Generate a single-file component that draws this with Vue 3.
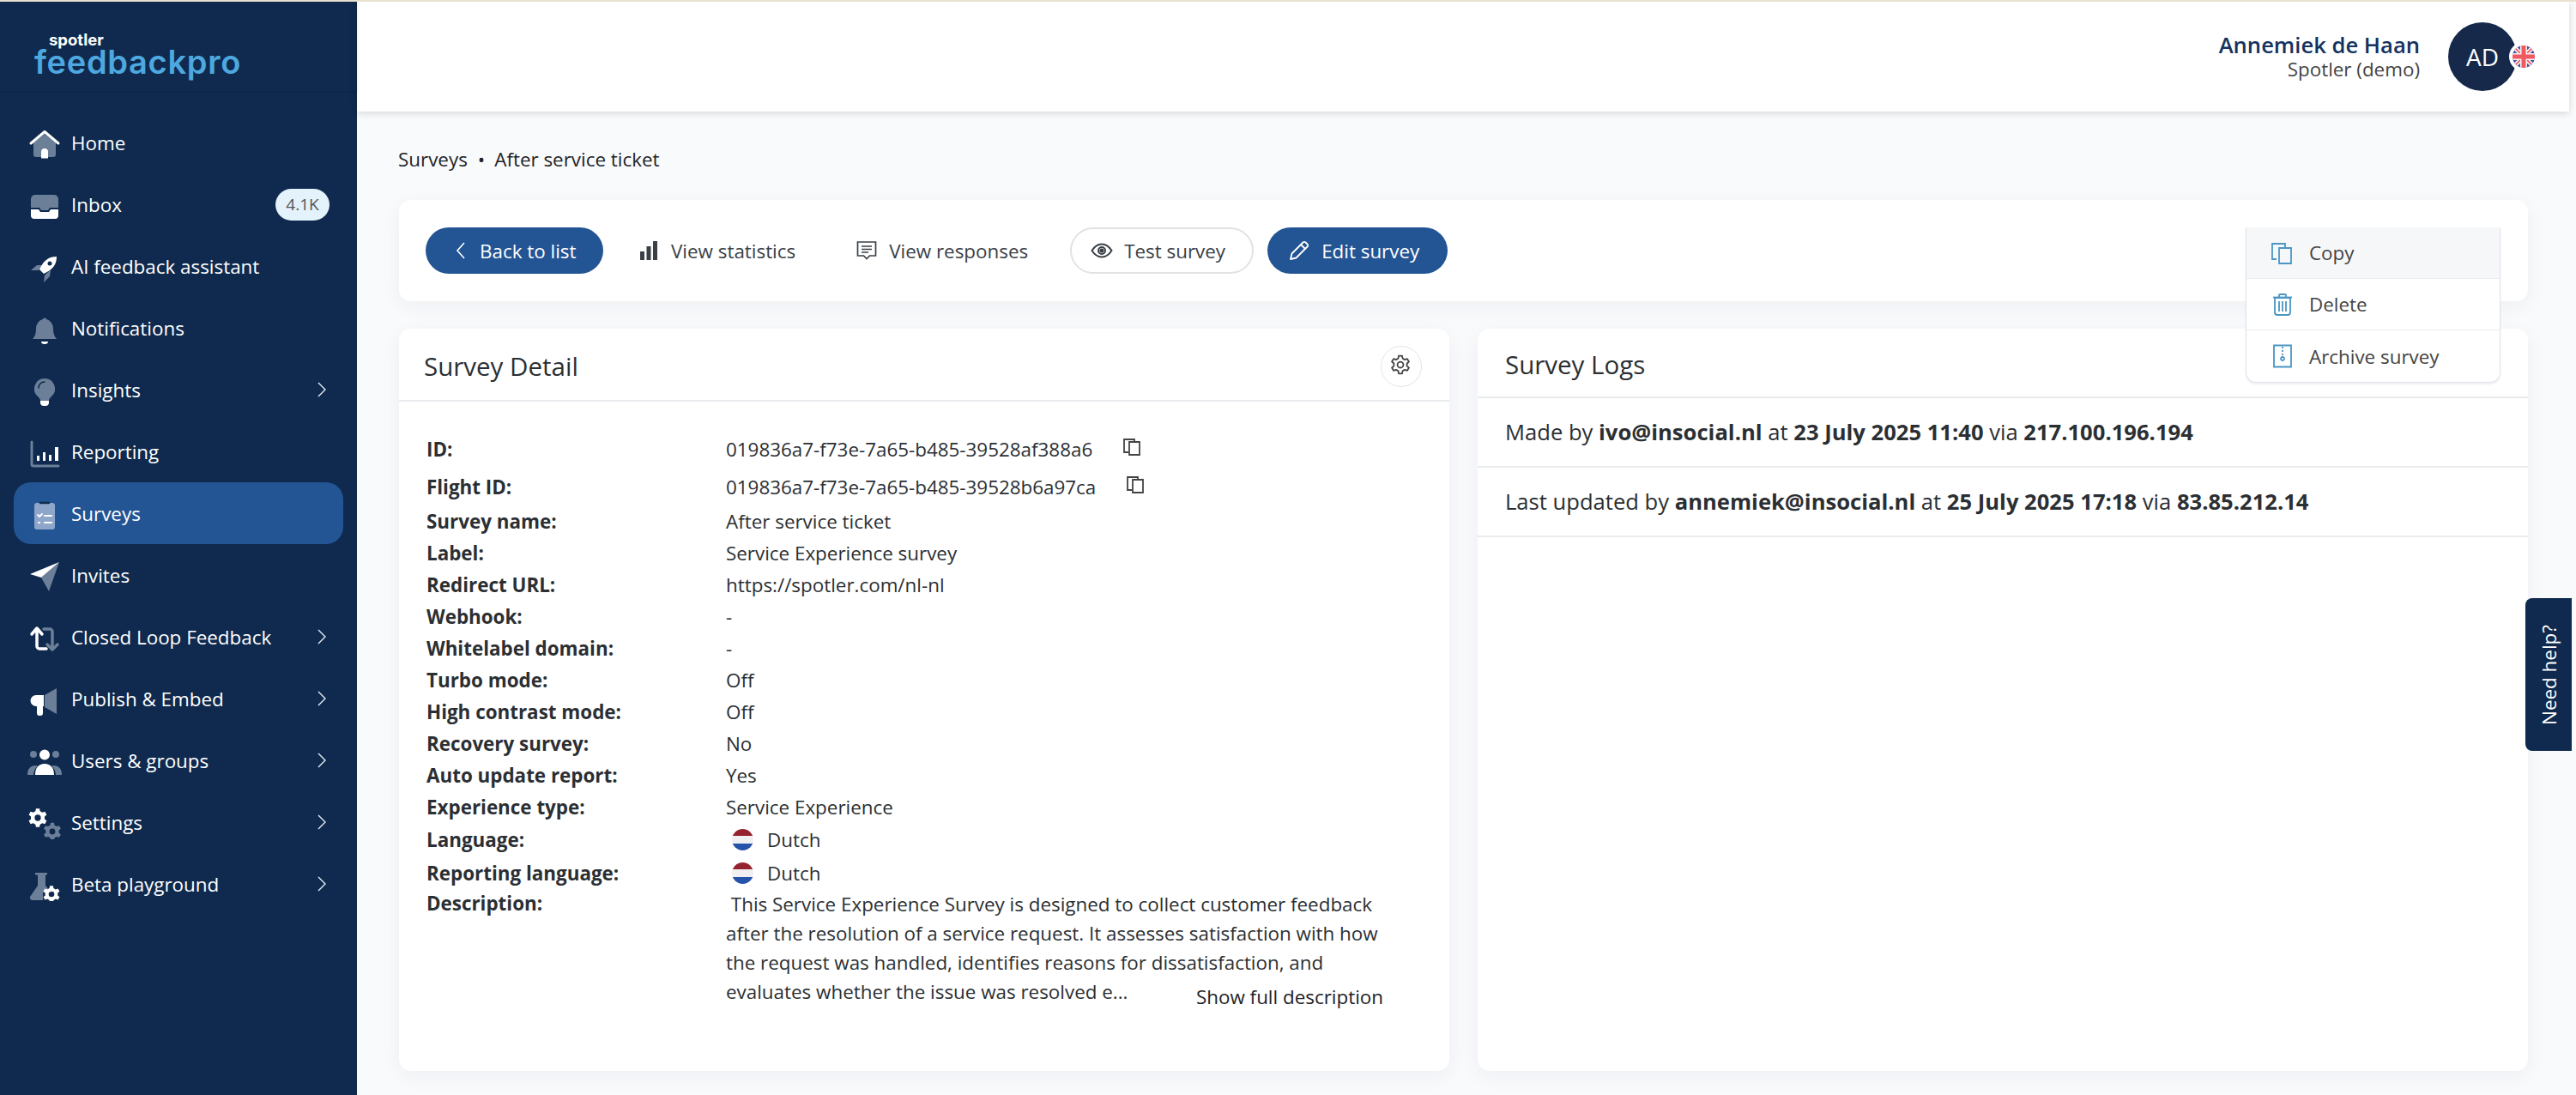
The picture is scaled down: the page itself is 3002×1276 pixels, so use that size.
<template>
  <div class="page">
    <aside class="sidebar">
      <div class="logo">
        <span class="logo-top">spotler</span>
        <span class="logo-main">feedbackpro</span>
      </div>
      <nav class="nav">
        <div v-for="item in menu" :key="item.label" class="nav-item" :class="{ active: item.active }">
          <svg class="nav-icon" viewBox="0 0 40 40">
            <path v-for="(p, i) in item.icon" :key="i" :d="p.d" :fill="p.stroke ? 'none' : toneColor(p.tone)"
              :stroke="p.stroke ? toneColor(p.tone) : 'none'" :stroke-width="p.stroke || 0" fill-rule="evenodd"
              stroke-linecap="round" stroke-linejoin="round" />
          </svg>
          <span class="nav-label">{{ item.label }}</span>
          <span v-if="item.badge" class="badge">{{ item.badge }}</span>
          <svg v-if="item.sub" class="nav-chevron" viewBox="0 0 10 20">
            <path d="M1 2l8 8-8 8" fill="none" stroke="#e8edf3" stroke-width="1.4" />
          </svg>
        </div>
      </nav>
    </aside>

    <div class="main">
      <header class="topbar">
        <div class="user">
          <div class="user-name">Annemiek de Haan</div>
          <div class="user-org">Spotler (demo)</div>
        </div>
        <div class="avatar">
          AD
          <span class="avatar-flag">
            <svg viewBox="0 0 26 26">
              <defs>
                <clipPath id="ukclip"><circle cx="13" cy="13" r="13" /></clipPath>
              </defs>
              <g clip-path="url(#ukclip)">
                <rect width="26" height="26" fill="#4a4f9c" />
                <path d="M0 0L26 26M26 0L0 26" stroke="#f3f3f6" stroke-width="5" />
                <path d="M0 0L26 26M26 0L0 26" stroke="#f0595f" stroke-width="1.6" />
                <path d="M13 0V26M0 13H26" stroke="#f3f3f6" stroke-width="8" />
                <path d="M13 0V26M0 13H26" stroke="#f0595f" stroke-width="5" />
              </g>
            </svg>
          </span>
        </div>
      </header>

      <div class="content">
        <div class="crumbs"><span>Surveys</span><span class="crumb-dot">•</span><span>After service ticket</span></div>

        <section class="toolbar">
          <button class="btn btn-primary back">
            <svg class="ico" width="14" height="24" viewBox="0 0 14 24"><path d="M11 3L3 12l8 9" fill="none" stroke="#fff" stroke-width="1.6" /></svg>
            Back to list
          </button>
          <button class="btn btn-plain stats">
            <svg width="22" height="22" viewBox="0 0 22 22"><path d="M1 12h5v10H1zM8.500 6h5v16h-5zM16 0h5v22h-5z" fill="#3a4046" /></svg>
            View statistics
          </button>
          <button class="btn btn-plain resp">
            <svg width="24" height="24" viewBox="0 0 24 24" fill="none" stroke="#3a4046" stroke-width="1.700"><path d="M1.500 2h21v16h-7l-3.500 3.500-3.500-3.500h-7z" /><path d="M6 7h12M6 10.500h12M6 14h8" /></svg>
            View responses
          </button>
          <button class="btn btn-outline test">
            <svg width="26" height="18" viewBox="0 0 26 18" fill="none" stroke="#3a4046" stroke-width="2"><path d="M1.500 9C5 3.500 9 1.500 13 1.500S21 3.500 24.500 9C21 14.500 17 16.500 13 16.500S5 14.500 1.500 9z" /><circle cx="13" cy="9" r="4" /><circle cx="13" cy="9" r="1.500" fill="#3a4046" /></svg>
            Test survey
          </button>
          <button class="btn btn-primary edit">
            <svg width="24" height="24" viewBox="0 0 24 24" fill="none" stroke="#fff" stroke-width="1.800" stroke-linejoin="round"><path d="M2 22l1.500-6.500L16.500 2.500a2 2 0 0 1 3 0l2 2a2 2 0 0 1 0 3L8.500 20.500z" /><path d="M14 5l5 5" /></svg>
            Edit survey
          </button>

          <div class="dropdown">
            <div v-for="a in actions" :key="a.label" class="drop-row" :class="{ hover: a.hover }">
              <svg class="drop-icon" width="28" height="28" viewBox="0 0 28 28" fill="none" stroke="#4a96c4" stroke-width="1.800">
                <path v-for="(d, i) in a.paths" :key="i" :d="d" />
              </svg>
              {{ a.label }}
            </div>
          </div>
        </section>

        <div class="cards">
          <section class="card">
            <div class="card-head detail-head">
              <h2>Survey Detail</h2>
              <button class="gear-btn">
                <svg width="28" height="28" viewBox="0 0 40 40">
                  <path :d="gearPath(20, 20, 15, 6)" fill="none" stroke="#444" stroke-width="2.600" stroke-linejoin="round" />
                </svg>
              </button>
            </div>
            <div class="detail-body">
              <div v-for="row in details" :key="row.label" class="detail-row" :class="row.cls">
                <span class="detail-label">{{ row.label }}</span>
                <span class="detail-value">
                  <template v-if="row.flag">
                    <span class="nl-flag"></span>
                    <span class="dutch">{{ row.value }}</span>
                  </template>
                  <template v-else>{{ row.value }}</template>
                  <svg v-if="row.copy" class="copy-ico" width="20" height="20" viewBox="0 0 20 20" fill="none" stroke="#444" stroke-width="1.800">
                    <path d="M6 16H1V1h12v3" /><path d="M7 4h12v15H7z" />
                  </svg>
                </span>
              </div>
              <div class="detail-row desc-row">
                <span class="detail-label">Description:</span>
                <div class="desc">
                  <p>&nbsp;This Service Experience Survey is designed to collect customer feedback after the resolution of a service request. It assesses satisfaction with how the request was handled, identifies reasons for dissatisfaction, and</p>
                  <div class="desc-last">
                    <span>evaluates whether the issue was resolved e...</span>
                    <span class="show-full">Show full description</span>
                  </div>
                </div>
              </div>
            </div>
          </section>

          <section class="card">
            <div class="card-head logs-head"><h2>Survey Logs</h2></div>
            <div class="log-row">Made by <b>ivo@insocial.nl</b> at <b>23 July 2025 11:40</b> via <b>217.100.196.194</b></div>
            <div class="log-row">Last updated by <b>annemiek@insocial.nl</b> at <b>25 July 2025 17:18</b> via <b>83.85.212.14</b></div>
          </section>
        </div>
      </div>
    </div>

    <div class="help"><span>Need help?</span></div>
  </div>
</template>

<script setup>
function gearPath(cx, cy, r, teeth) {
  // cog outline, teeth around the circle
  const inner = r * 0.74
  const step = (Math.PI * 2) / teeth
  let d = ''
  for (let i = 0; i < teeth; i++) {
    const a = i * step - Math.PI / 2
    const pts = [
      [inner, a - step * 0.32],
      [r, a - step * 0.18],
      [r, a + step * 0.18],
      [inner, a + step * 0.32]
    ]
    pts.forEach(([rad, ang], j) => {
      const x = (cx + rad * Math.cos(ang)).toFixed(2)
      const y = (cy + rad * Math.sin(ang)).toFixed(2)
      d += (i === 0 && j === 0 ? 'M' : 'L') + x + ' ' + y
    })
  }
  d += 'Z'
  const h = r * 0.33
  d += `M${cx - h} ${cy}a${h} ${h} 0 1 0 ${h * 2} 0a${h} ${h} 0 1 0 ${-h * 2} 0Z`
  return d
}

function toneColor(tone) {
  if (tone === 'w') return '#ffffff'
  if (tone === 'd') return '#0f2a4e'
  if (tone === 'l') return '#8ea6c9'
  return '#6c7f98'
}

const menu = [
  { label: 'Home', icon: [
    { tone: 'g', d: 'M7 20L20 10l13 10v14a3 3 0 0 1-3 3H10a3 3 0 0 1-3-3z' },
    { tone: 'w', d: 'M4 21L20 7.500 36 21', stroke: 3 },
    { tone: 'w', d: 'M16 38.500V31a4 4 0 0 1 8 0v7.500z' }
  ] },
  { label: 'Inbox', badge: '4.1K', icon: [
    { tone: 'g', d: 'M9 9h22a5 5 0 0 1 5 5v10H26l-2 3H16l-2-3H4V14a5 5 0 0 1 5-5z' },
    { tone: 'w', d: 'M4 26h9l2 3h10l2-3h9v7a4 4 0 0 1-4 4H8a4 4 0 0 1-4-4z' }
  ] },
  { label: 'AI feedback assistant', icon: [
    { tone: 'g', d: 'M4 25l7-6h7l-5 6zM20 31l7-7-1 8-7 7z' },
    { tone: 'w', d: 'M34 9c-9 0-15 4-20 15l5 5c11-5 15-11 15-20zM26 14.500a2.500 2.500 0 1 0 0 5 2.500 2.500 0 0 0 0-5z' }
  ] },
  { label: 'Notifications', icon: [
    { tone: 'g', d: 'M6 33c3-3 4-7 4-12 0-6 4-10 8-11 0-2 4-2 4 0 4 1 8 5 8 11 0 5 1 9 4 12z' },
    { tone: 'w', d: 'M16 36h8a4 3 0 0 1-8 0z' }
  ] },
  { label: 'Insights', sub: true, icon: [
    { tone: 'g', d: 'M20 7a12 12 0 0 1 8 21c-2 2-3 3-3 5H15c0-2-1-3-3-5a12 12 0 0 1 8-21z' },
    { tone: 'd', d: 'M13 18c0-4 3-7 7-7', stroke: 1.6 },
    { tone: 'w', d: 'M15 33h10v2a4 4 0 0 1-4 4h-2a4 4 0 0 1-4-4z' }
  ] },
  { label: 'Reporting', icon: [
    { tone: 'g', d: 'M5 9v26a2 2 0 0 0 2 2h29', stroke: 3 },
    { tone: 'w', d: 'M11 25h3v6h-3zM18 21h3v10h-3zM25 24h3v7h-3zM32 15h4v16h-4z' }
  ] },
  { label: 'Surveys', active: true, icon: [
    { tone: 'l', d: 'M11 8h18a3 3 0 0 1 3 3v25a3 3 0 0 1-3 3H11a3 3 0 0 1-3-3V11a3 3 0 0 1 3-3z' },
    { tone: 'd', d: 'M15 8h10', stroke: 2.500 },
    { tone: 'w', d: 'M12 22l2 2 3-3', stroke: 1.800 },
    { tone: 'w', d: 'M20 23h8M20 31h8M13 31h1', stroke: 2.200 }
  ] },
  { label: 'Invites', icon: [
    { tone: 'g', d: 'M37 5L16 23l9 16z' },
    { tone: 'w', d: 'M3 19L37 5 16 23z' }
  ] },
  { label: 'Closed Loop Feedback', sub: true, icon: [
    { tone: 'g', d: 'M19 11h7a3 3 0 0 1 3 3v20M23 29l6 6 6-6', stroke: 3.500 },
    { tone: 'w', d: 'M11 12v19a3 3 0 0 0 3 3h8M5 17l6-7 6 7', stroke: 3.500 }
  ] },
  { label: 'Publish & Embed', sub: true, icon: [
    { tone: 'g', d: 'M20 16L34 8v30l-14-8z' },
    { tone: 'w', d: 'M10 16h9v13H10a6.500 6.500 0 0 1 0-13zM11 29h7v8a3 3 0 0 1-3 3h-1a3 3 0 0 1-3-3z' }
  ] },
  { label: 'Users & groups', sub: true, icon: [
    { tone: 'g', d: 'M3 13a4 4 0 1 0 8 0 4 4 0 0 0-8 0zM29 13a4 4 0 1 0 8 0 4 4 0 0 0-8 0zM0 37c0-7 3-11 10-11l2 1c-3 2-5 6-5 10zM40 37c0-7-3-11-10-11l-2 1c3 2 5 6 5 10z' },
    { tone: 'w', d: 'M14 13.500a6 6 0 1 0 12 0 6 6 0 0 0-12 0zM9 37c0-8 4-13 11-13s11 5 11 13z' }
  ] },
  { label: 'Settings', sub: true, icon: [
    { tone: 'g', d: gearPath(29, 31, 10.500, 6) },
    { tone: 'w', d: gearPath(12, 15, 11, 6) }
  ] },
  { label: 'Beta playground', sub: true, icon: [
    { tone: 'g', d: 'M9 7h14v2.500h-2V22l7 8H18v9H6a3 3 0 0 1-3-4l9-13V9.500H9z' },
    { tone: 'w', d: gearPath(28, 32, 10, 6) }
  ] }
]

const actions = [
  { label: 'Copy', hover: true, paths: ['M7 21H2V3h15v4', 'M10 8h14v18H10z'] },
  { label: 'Delete', paths: ['M5 6h18v17a3 3 0 0 1-3 3H8a3 3 0 0 1-3-3z', 'M3 5.500h22', 'M10 5V3a1 1 0 0 1 1-1h6a1 1 0 0 1 1 1v2', 'M10 10v12M14 10v12M18 10v12'] },
  { label: 'Archive survey', paths: ['M4 1.500h20v25H4z', 'M14 3v2M14 7v2M14 11v2', 'M14 15a2 2 0 1 0 .01 0z'] }
]

const details = [
  { label: 'ID:', value: '019836a7-f73e-7a65-b485-39528af388a6', copy: true, cls: 'row-id' },
  { label: 'Flight ID:', value: '019836a7-f73e-7a65-b485-39528b6a97ca', copy: true, cls: 'row-id' },
  { label: 'Survey name:', value: 'After service ticket' },
  { label: 'Label:', value: 'Service Experience survey' },
  { label: 'Redirect URL:', value: 'https://spotler.com/nl-nl' },
  { label: 'Webhook:', value: '-' },
  { label: 'Whitelabel domain:', value: '-' },
  { label: 'Turbo mode:', value: 'Off' },
  { label: 'High contrast mode:', value: 'Off' },
  { label: 'Recovery survey:', value: 'No' },
  { label: 'Auto update report:', value: 'Yes' },
  { label: 'Experience type:', value: 'Service Experience' },
  { label: 'Language:', value: 'Dutch', flag: true, cls: 'row-lang' },
  { label: 'Reporting language:', value: 'Dutch', flag: true, cls: 'row-lang' }
]
</script>

<style>
html,
body {
  margin: 0;
  background: #f9fafc;
}
</style>

<style scoped>
.page {
  display: flex;
  position: relative;
  width: 3002px;
  height: 1276px;
  box-sizing: border-box;
  border-top: 2px solid #e9e1cf;
  overflow: hidden;
  font-family: "Open Sans", "Noto Sans", sans-serif;
  color: #2b2f33;
  background: #f9fafc;
}

/* sidebar */
.sidebar {
  width: 416px;
  flex-shrink: 0;
  background: #0f2a4e;
}

.logo {
  height: 104px;
  box-sizing: border-box;
  padding: 35px 0 0 40px;
  position: relative;
  box-shadow: 0 1px 3px rgba(0, 0, 0, 0.12);
}

.logo-top {
  display: block;
  margin-left: 17px;
  font-family: "Inter", sans-serif;
  font-weight: 700;
  font-size: 18.5px;
  line-height: 18px;
  color: #fff;
}

.logo-main {
  display: block;
  margin-top: -2.5px;
  font-family: "Inter", sans-serif;
  font-weight: 600;
  font-size: 38px;
  letter-spacing: 0.7px;
  line-height: 38px;
  color: #4ea8e0;
}

.nav {
  padding-top: 24px;
}

.nav-item {
  display: flex;
  align-items: center;
  height: 72px;
  margin: 0 16px;
  padding: 0 20px 0 16px;
  border-radius: 20px;
  color: #fff;
  font-size: 22.4px;
}

.nav-item.active {
  background: #235494;
}

.nav-icon {
  width: 40px;
  height: 40px;
  flex-shrink: 0;
}

.nav-label {
  flex: 1;
  margin-left: 11px;
  white-space: nowrap;
}

.badge {
  width: 63px;
  height: 37px;
  margin-right: -4px;
  border-radius: 19px;
  background: #e3f2fb;
  color: #555;
  font-size: 19px;
  line-height: 37px;
  text-align: center;
}

.nav-chevron {
  width: 10px;
  height: 20px;
}

/* top bar */
.main {
  flex: 1;
  min-width: 0;
}

.topbar {
  display: flex;
  align-items: center;
  justify-content: flex-end;
  height: 128px;
  margin-right: 8px;
  padding-right: 61px;
  background: #fff;
  box-shadow: 0 2px 8px rgba(0, 0, 0, 0.14);
}

.user {
  text-align: right;
  margin-right: 33px;
}

.user-name {
  font-size: 25.6px;
  line-height: 30px;
  font-weight: 600;
  color: #143360;
}

.user-org {
  font-size: 22.4px;
  line-height: 26px;
  color: #444;
}

.avatar {
  position: relative;
  width: 80px;
  height: 80px;
  border-radius: 50%;
  background: #16294a;
  color: #fff;
  font-size: 28px;
  line-height: 80px;
  text-align: center;
}

.avatar-flag {
  position: absolute;
  left: 71px;
  top: 23px;
  width: 26px;
  height: 26px;
  padding: 4px;
  border-radius: 50%;
  background: #fff;
  display: flex;
}

.avatar-flag svg {
  width: 26px;
  height: 26px;
}

/* content */
.content {
  padding: 41px 56px 0 49px;
}

.crumbs {
  display: flex;
  align-items: center;
  margin-left: -1px;
  font-size: 22.4px;
  line-height: 30px;
  color: #1f2327;
}

.crumb-dot {
  margin: 0 11px 0 12px;
}

.toolbar {
  position: relative;
  display: flex;
  align-items: center;
  height: 118px;
  margin-top: 32px;
  padding-left: 31px;
  background: #fff;
  border-radius: 14px;
  box-shadow: 0 6px 24px rgba(30, 40, 60, 0.05);
}

.btn {
  display: flex;
  align-items: center;
  height: 54px;
  box-sizing: border-box;
  border: none;
  border-radius: 27px;
  font-family: inherit;
  font-size: 22.4px;
  background: none;
  padding: 0;
  white-space: nowrap;
}

.btn-primary {
  background: #235494;
  color: #fff;
}

.btn-plain {
  color: #3a4046;
}

.btn-outline {
  border: 2px solid #e0e2e4;
  color: #3a4046;
}

.back {
  width: 207px;
  padding-left: 34px;
  gap: 15px;
}

.stats {
  margin-left: 42px;
  gap: 15px;
}

.resp {
  margin-left: 71px;
  gap: 14px;
}

.test {
  width: 214px;
  margin-left: 49px;
  padding-left: 22px;
  gap: 13px;
}

.edit {
  width: 210px;
  margin-left: 16px;
  padding-left: 25px;
  gap: 14px;
}

.dropdown {
  position: absolute;
  right: 32px;
  top: 32px;
  width: 297px;
  box-sizing: border-box;
  background: #fff;
  border: 1px solid #dfe3ea;
  border-top: none;
  border-radius: 0 0 12px 12px;
  box-shadow: 0 2px 2px rgba(60, 80, 110, 0.08);
  z-index: 3;
}

.drop-row {
  display: flex;
  align-items: center;
  height: 60px;
  padding-left: 28px;
  gap: 17px;
  font-size: 22.4px;
  color: #444;
  border-bottom: 1px solid #e9ebef;
  box-sizing: border-box;
}

.drop-row:last-child {
  border-bottom: none;
}

.drop-row.hover {
  background: #f6f7f9;
}

.drop-icon {
  flex-shrink: 0;
}

.cards {
  display: grid;
  grid-template-columns: 1224px 1224px;
  gap: 33px;
  margin-top: 32px;
}

.card {
  height: 865px;
  background: #fff;
  border-radius: 14px;
  box-shadow: 0 6px 24px rgba(30, 40, 60, 0.05);
}

.card-head {
  display: flex;
  align-items: center;
  justify-content: space-between;
  box-sizing: border-box;
  padding: 4px 32px 0 29px;
  border-bottom: 2px solid #e9ebee;
}

.detail-head {
  height: 85px;
}

.logs-head {
  height: 81px;
  padding-left: 32px;
}

.card-head h2 {
  margin: 0;
  font-size: 29.5px;
  font-weight: 400;
  color: #2b2f33;
}

.gear-btn {
  display: flex;
  align-items: center;
  justify-content: center;
  width: 48px;
  height: 48px;
  padding: 0 2px 4px 0;
  box-sizing: border-box;
  border: 1px solid #e2e4e6;
  border-radius: 50%;
  background: #fff;
}

.detail-body {
  padding: 33px 32px 0;
}

.detail-row {
  display: flex;
  height: 37px;
  align-items: center;
  font-size: 22.4px;
}

.row-id {
  height: 44px;
}

.row-lang {
  height: 39px;
}

.detail-label {
  width: 349px;
  flex-shrink: 0;
  font-weight: 700;
}

.detail-value {
  display: flex;
  align-items: center;
  white-space: pre;
}

.copy-ico {
  margin-left: 36px;
  margin-bottom: 4px;
}

.nl-flag {
  width: 25px;
  height: 25px;
  margin: 0 16px 0 7px;
  border-radius: 50%;
  background: linear-gradient(#97222f 0 33%, #f0f0f2 33% 67%, #2553ac 67% 100%);
}

.desc-row {
  height: auto;
  align-items: flex-start;
}

.desc {
  width: 766px;
  line-height: 34px;
}

.desc p {
  margin: 0;
}

.desc-last {
  display: flex;
  justify-content: space-between;
  align-items: flex-start;
}

.show-full {
  margin-top: 6px;
  color: #1f2327;
}

.log-row {
  height: 81px;
  box-sizing: border-box;
  padding-left: 32px;
  border-bottom: 2px solid #e9ebee;
  font-size: 25.6px;
  line-height: 79px;
  white-space: pre;
  color: #2b2f33;
}

.help {
  position: absolute;
  left: 2943px;
  top: 695px;
  width: 54px;
  height: 178px;
  display: flex;
  align-items: center;
  justify-content: center;
  background: #0f2a4e;
  border-radius: 8px 0 0 8px;
  z-index: 4;
}

.help span {
  transform: rotate(-90deg);
  color: #fff;
  font-size: 22.4px;
  white-space: nowrap;
}
</style>
